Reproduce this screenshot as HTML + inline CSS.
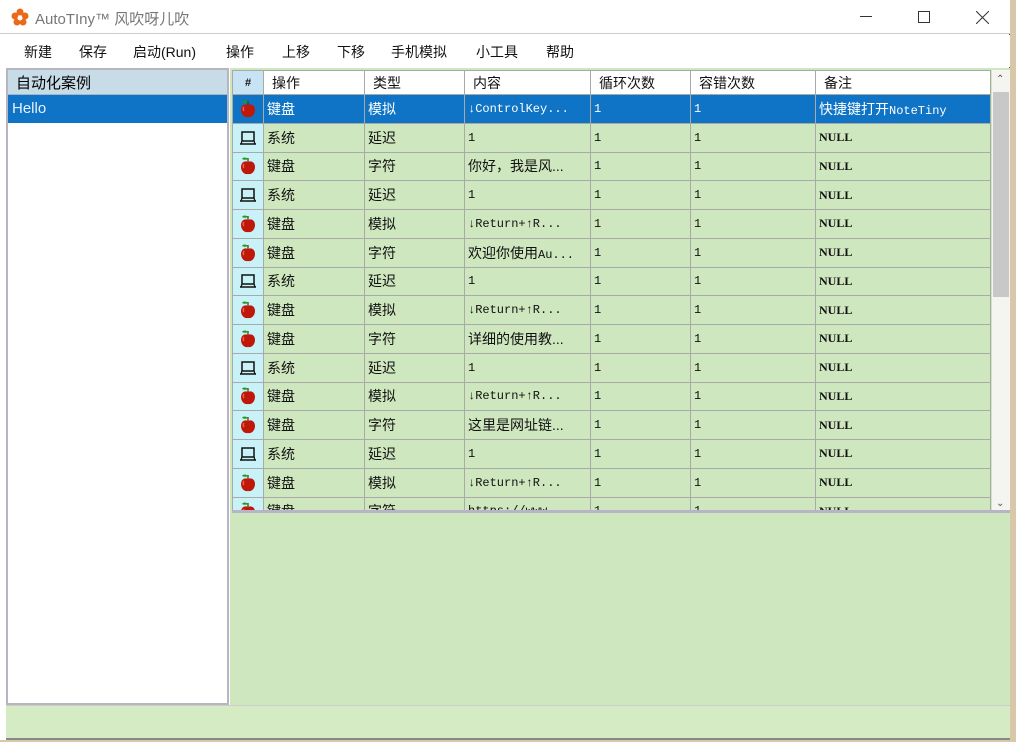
<!DOCTYPE html>
<html><head><meta charset="utf-8"><style>
*{margin:0;padding:0;box-sizing:border-box}
body{width:1016px;height:742px;overflow:hidden;background:#d9c8a8;font-family:"Liberation Sans","Noto Sans CJK SC",sans-serif;position:relative}
#win{position:absolute;left:0;top:0;width:1010px;height:740px;background:#fff;border-right:1px solid #555}
#title{position:absolute;left:0;top:0;width:1010px;height:34px;background:#fff;border-bottom:1px solid #ccc}
#title .t{position:absolute;left:35px;top:8px;font-size:15px;color:#777}
#menu{position:absolute;left:0;top:35px;width:1010px;height:32px;background:#fff;font-size:14px;color:#111}
#menu span{position:absolute;top:7px}
#left{position:absolute;left:6px;top:68px;width:223px;height:637px;background:#fff;border:2px solid #b8b4c0}
#left .h{height:25px;background:#c8dce8;font-size:15px;padding:2px 0 0 8px;border-bottom:1px solid #a0b8c8}
#left .s{height:28px;background:#0f74c6;color:#e8f0ff;font-size:15px;padding:5px 0 0 4px}
#right{position:absolute;left:230px;top:68px;width:780px;height:637px;background:#cfe7bf}
#grid{position:absolute;left:2px;top:2px;width:778px;height:443px;overflow:hidden;border-bottom:3px solid #b8b4c8;background:#cfe7bf}
table{border-collapse:collapse;table-layout:fixed;position:absolute;left:0;top:0}
td{border:1px solid #a8aaa8;height:28.75px;font-size:14px;padding-left:3px;white-space:nowrap;overflow:hidden;color:#111}
tr.hd td{height:24px;background:#fff;padding-left:8px}
td.n{background:#c8f2f8;padding:0;text-align:center;line-height:0}
tr.hd td.n{background:#c8e4f4;padding:0;font-size:11px;font-weight:bold;line-height:normal}
.m{font-family:"Liberation Mono","Noto Sans CJK SC",monospace;font-size:12px}
.nl{font-family:"Liberation Serif",serif;font-size:12px;font-weight:bold}
tr.sel td{background:#0f74c6;color:#fff}
tr.sel td.n{background:#0f74c6}
#sb{position:absolute;left:760px;top:0;width:18px;height:443px;background:#f4f4f0}
#sb .th{position:absolute;left:1px;top:22px;width:16px;height:205px;background:#c8c8c8}
#status{position:absolute;left:6px;top:705px;width:1004px;height:35px;background:#d4ebc4;border-top:1px solid #ccc;border-bottom:2px solid #888}
</style></head><body>
<svg width="0" height="0" style="position:absolute"><defs>
<symbol id="ap" viewBox="0 0 20 20"><path d="M10 6C6 4 3 7 3 11C3 15 6 19 10 18C14 19 17 15 17 11C17 7 14 4 10 6Z" fill="#c01808"/><path d="M6 8C5 9 5 11 6 12" stroke="#e86050" stroke-width="1.5" fill="none"/><path d="M10 6L10 2" stroke="#553300" stroke-width="1.2"/><path d="M10 3C8 1 5 1 4 3C6 4 8 4 10 3Z" fill="#18a018"/></symbol>
<symbol id="pc" viewBox="0 0 20 20"><rect x="4" y="4" width="12" height="9" fill="none" stroke="#111" stroke-width="1.5"/><path d="M2 16H18" stroke="#111" stroke-width="1.5"/><path d="M3 16L4 13M17 16L16 13" stroke="#111" stroke-width="1.2"/></symbol>
</defs></svg>
<div id="win">
<div id="title">
<svg style="position:absolute;left:11px;top:8px" width="18" height="18" viewBox="0 0 18 18"><g fill="#e86a1a"><circle cx="9" cy="4" r="3.5"/><circle cx="14" cy="8" r="3.5"/><circle cx="12" cy="14" r="3.5"/><circle cx="6" cy="14" r="3.5"/><circle cx="4" cy="8" r="3.5"/></g><circle cx="9" cy="10" r="2.5" fill="#fff"/></svg>
<div class="t">AutoTIny™ 风吹呀儿吹</div>
<div style="position:absolute;left:860px;top:16px;width:12px;height:1px;background:#333"></div>
<div style="position:absolute;left:918px;top:11px;width:12px;height:12px;border:1px solid #333"></div>
<svg style="position:absolute;left:976px;top:11px" width="13" height="13"><path d="M0 0L13 13M13 0L0 13" stroke="#333" stroke-width="1"/></svg>
</div>
<div id="menu">
<span style="left:24px">新建</span><span style="left:79px">保存</span><span style="left:133px">启动(Run)</span><span style="left:226px">操作</span><span style="left:282px">上移</span><span style="left:337px">下移</span><span style="left:391px">手机模拟</span><span style="left:476px">小工具</span><span style="left:546px">帮助</span>
</div>
<div id="left"><div class="h">自动化案例</div><div class="s">Hello</div></div>
<div id="right">
<div id="grid">
<table>
<colgroup><col style="width:31px"><col style="width:101px"><col style="width:100px"><col style="width:126px"><col style="width:100px"><col style="width:125px"><col style="width:175px"></colgroup>
<tr class="hd"><td class="n">#</td><td>操作</td><td>类型</td><td>内容</td><td>循环次数</td><td>容错次数</td><td>备注</td></tr>
<tr class="sel"><td class="n"><svg width="20" height="20"><use href="#ap"/></svg></td><td>键盘</td><td>模拟</td><td class="m">↓ControlKey...</td><td class="m">1</td><td class="m">1</td><td>快捷键打开<span class="m">NoteTiny</span></td></tr>
<tr><td class="n"><svg width="20" height="20"><use href="#pc"/></svg></td><td>系统</td><td>延迟</td><td class="m">1</td><td class="m">1</td><td class="m">1</td><td class="nl">NULL</td></tr>
<tr><td class="n"><svg width="20" height="20"><use href="#ap"/></svg></td><td>键盘</td><td>字符</td><td>你好，我是风...</td><td class="m">1</td><td class="m">1</td><td class="nl">NULL</td></tr>
<tr><td class="n"><svg width="20" height="20"><use href="#pc"/></svg></td><td>系统</td><td>延迟</td><td class="m">1</td><td class="m">1</td><td class="m">1</td><td class="nl">NULL</td></tr>
<tr><td class="n"><svg width="20" height="20"><use href="#ap"/></svg></td><td>键盘</td><td>模拟</td><td class="m">↓Return+↑R...</td><td class="m">1</td><td class="m">1</td><td class="nl">NULL</td></tr>
<tr><td class="n"><svg width="20" height="20"><use href="#ap"/></svg></td><td>键盘</td><td>字符</td><td>欢迎你使用<span class="m">Au...</span></td><td class="m">1</td><td class="m">1</td><td class="nl">NULL</td></tr>
<tr><td class="n"><svg width="20" height="20"><use href="#pc"/></svg></td><td>系统</td><td>延迟</td><td class="m">1</td><td class="m">1</td><td class="m">1</td><td class="nl">NULL</td></tr>
<tr><td class="n"><svg width="20" height="20"><use href="#ap"/></svg></td><td>键盘</td><td>模拟</td><td class="m">↓Return+↑R...</td><td class="m">1</td><td class="m">1</td><td class="nl">NULL</td></tr>
<tr><td class="n"><svg width="20" height="20"><use href="#ap"/></svg></td><td>键盘</td><td>字符</td><td>详细的使用教...</td><td class="m">1</td><td class="m">1</td><td class="nl">NULL</td></tr>
<tr><td class="n"><svg width="20" height="20"><use href="#pc"/></svg></td><td>系统</td><td>延迟</td><td class="m">1</td><td class="m">1</td><td class="m">1</td><td class="nl">NULL</td></tr>
<tr><td class="n"><svg width="20" height="20"><use href="#ap"/></svg></td><td>键盘</td><td>模拟</td><td class="m">↓Return+↑R...</td><td class="m">1</td><td class="m">1</td><td class="nl">NULL</td></tr>
<tr><td class="n"><svg width="20" height="20"><use href="#ap"/></svg></td><td>键盘</td><td>字符</td><td>这里是网址链...</td><td class="m">1</td><td class="m">1</td><td class="nl">NULL</td></tr>
<tr><td class="n"><svg width="20" height="20"><use href="#pc"/></svg></td><td>系统</td><td>延迟</td><td class="m">1</td><td class="m">1</td><td class="m">1</td><td class="nl">NULL</td></tr>
<tr><td class="n"><svg width="20" height="20"><use href="#ap"/></svg></td><td>键盘</td><td>模拟</td><td class="m">↓Return+↑R...</td><td class="m">1</td><td class="m">1</td><td class="nl">NULL</td></tr>
<tr><td class="n"><svg width="20" height="20"><use href="#ap"/></svg></td><td>键盘</td><td>字符</td><td class="m">https://www...</td><td class="m">1</td><td class="m">1</td><td class="nl">NULL</td></tr>
</table>
<div id="sb"><div style="position:absolute;left:4px;top:4px;font-size:10px;color:#555">⌃</div><div class="th"></div><div style="position:absolute;left:4px;bottom:4px;font-size:10px;color:#555">⌄</div></div>
</div>
</div>
<div id="status"></div>
</div>
</body></html>
